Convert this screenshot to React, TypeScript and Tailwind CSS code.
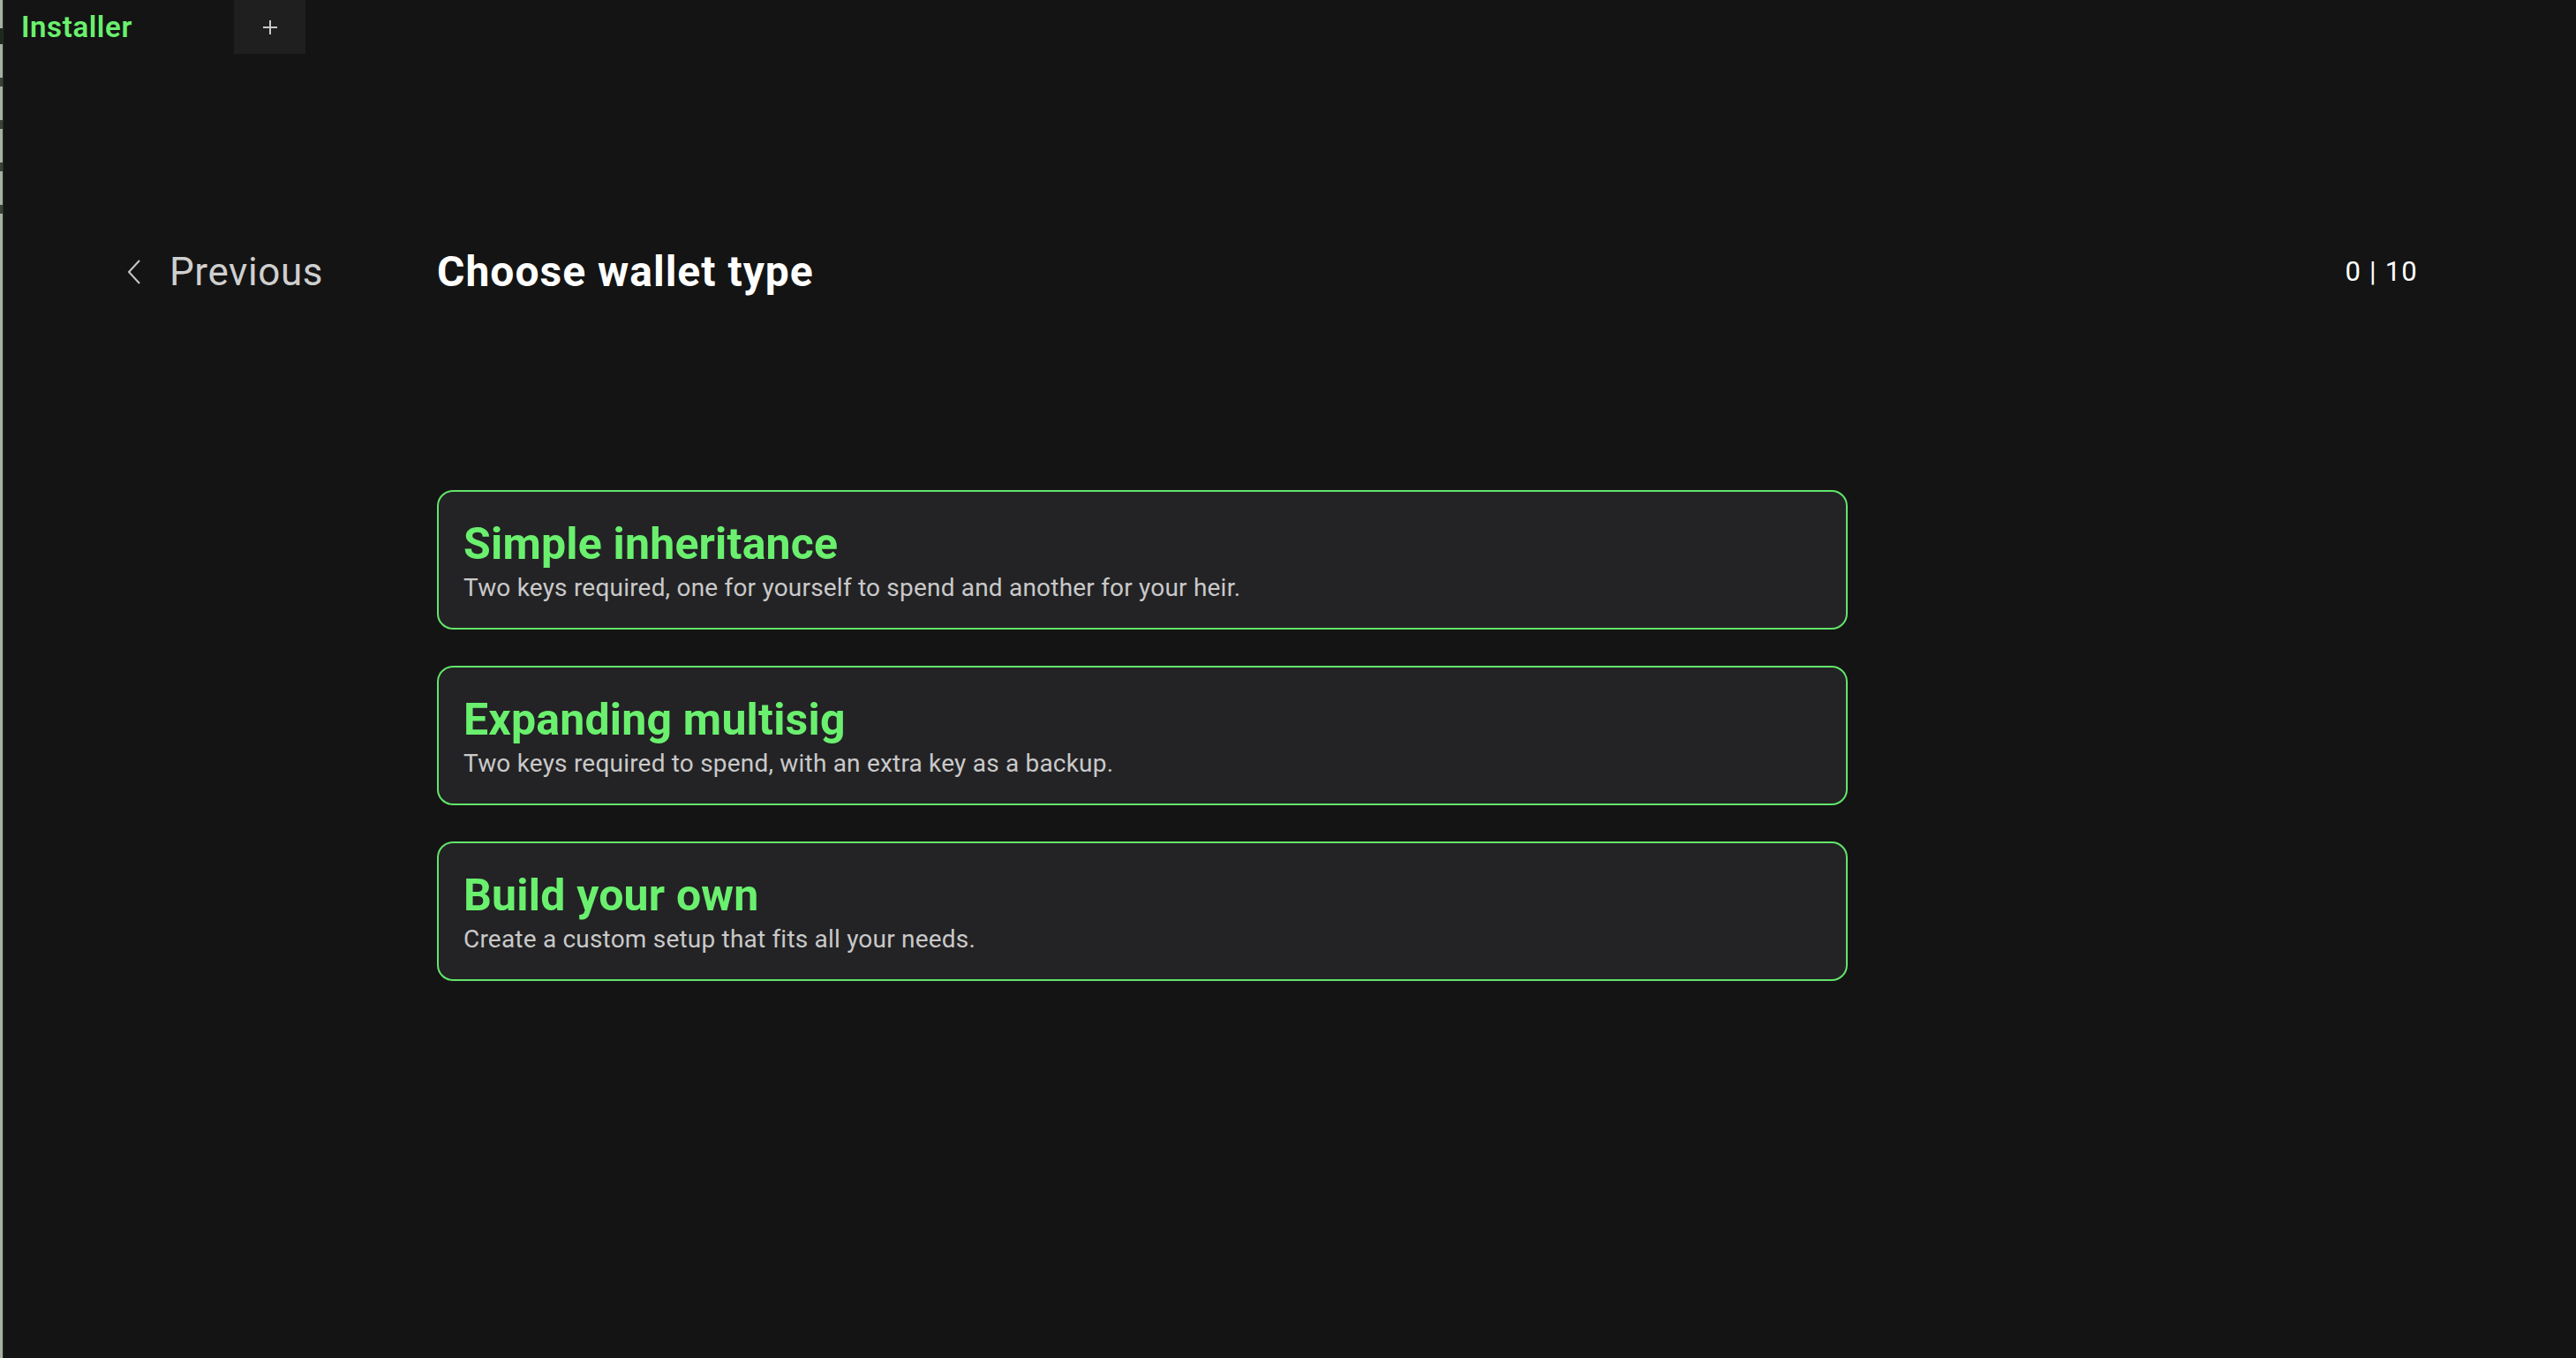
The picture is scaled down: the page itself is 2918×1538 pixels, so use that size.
import React from 'react';

const font = { fontFamily: 'Roboto, "Noto Sans", sans-serif' };

const walletTypes = [
  {
    title: 'Simple inheritance',
    description: 'Two keys required, one for yourself to spend and another for your heir.',
  },
  {
    title: 'Expanding multisig',
    description: 'Two keys required to spend, with an extra key as a backup.',
  },
  {
    title: 'Build your own',
    description: 'Create a custom setup that fits all your needs.',
  },
];

function WalletCard({ title, description }: { title: string; description: string }) {
  return (
    <button className="w-full h-[158px] text-left border-2 border-[#62e56a] rounded-[18px] bg-[#232325] pl-[28px] pt-[29px] flex flex-col">
      <span className="text-[50px] leading-[60px] font-bold text-[#6af06e] tracking-[0.2px]">{title}</span>
      <span className="mt-[3px] text-[28px] leading-[34px] text-[#c9c9c9] tracking-[0.2px]">{description}</span>
    </button>
  );
}

export default function App() {
  return (
    <div className="h-screen w-full bg-[#141414] flex overflow-hidden" style={font}>
      {/* Edge of a window behind */}
      <div className="w-[4px] h-full bg-[#a7b19f] border-r border-[#2b2b2b] flex flex-col gap-[38px] pt-[32px]">
        <div className="h-[18px] bg-[#1b2a1b]" />
        <div className="h-[10px] bg-[#3a4236]" />
        <div className="h-[10px] bg-[#3a4236]" />
        <div className="h-[10px] bg-[#3a4236]" />
        <div className="h-[10px] bg-[#3a4236]" />
      </div>

      <div className="flex-1 flex flex-col">
        {/* Tabs */}
        <div className="h-[61px] flex shrink-0">
          <div className="w-[261px] pl-[20px] flex items-center">
            <span className="text-[33px] font-semibold text-[#6af06e] tracking-[0.6px]">Installer</span>
          </div>
          <div className="w-[81px] bg-[#1f1f1f] flex items-center justify-center">
            <svg width="18" height="18" viewBox="0 0 18 18" fill="none" stroke="#c8c8c8" strokeWidth="2">
              <line x1="9" y1="1" x2="9" y2="17" />
              <line x1="1" y1="9" x2="17" y2="9" />
            </svg>
          </div>
        </div>

        {/* Header row */}
        <div className="mt-[217px] h-[60px] flex items-center pl-[140px] pr-[179px]">
          <button className="w-[351px] flex items-center gap-[32px] text-[#cfcfcf]">
            <svg width="16" height="28" viewBox="0 0 16 28" fill="none" stroke="#c8c8c8" strokeWidth="2">
              <polyline points="14,1 2,14 14,27" />
            </svg>
            <span className="text-[44px] leading-[60px] tracking-[0.6px]">Previous</span>
          </button>
          <h1 className="flex-1 text-[48px] leading-[60px] font-bold text-white tracking-[1px]">Choose wallet type</h1>
          <span className="text-[31px] text-white tracking-[1.2px]">0 | 10</span>
        </div>

        {/* Options */}
        <div className="mt-[217px] ml-[491px] w-[1598px] flex flex-col gap-[41px]">
          {walletTypes.map((w) => (
            <WalletCard key={w.title} title={w.title} description={w.description} />
          ))}
        </div>
      </div>
    </div>
  );
}
